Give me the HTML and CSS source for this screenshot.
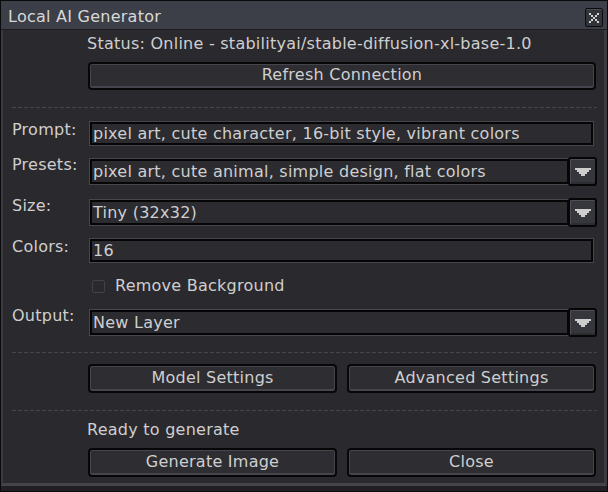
FILE: index.html
```html
<!DOCTYPE html>
<html lang="en">

<head>
    <meta charset="UTF-8">
    <meta name="viewport" content="width=device-width, initial-scale=1.0">
    <title>Local AI Generator</title>
    <link rel="stylesheet" href="styles.css">
</head>

<body>

    <div class="window">
        <!-- Title bar -->
        <div class="titlebar">
            <span class="title">Local AI Generator</span>
            <button class="close-btn" type="button" aria-label="Close">
                <svg width="10" height="10" viewBox="0 0 10 10">
                    <path fill="#d2d2d2" d="M0 0h2v2H0zM2 2h2v2H2zM4 4h2v2H4zM6 6h2v2H6zM8 8h2v2H8zM8 0h2v2H8zM6 2h2v2H6zM2 6h2v2H2zM0 8h2v2H0z" />
                </svg>
            </button>
        </div>

        <div class="content">
            <!-- Connection -->
            <p class="status">Status: Online - stabilityai/stable-diffusion-xl-base-1.0</p>
            <button class="btn btn-wide" type="button">Refresh Connection</button>

            <hr class="sep sep-first">

            <!-- Generation options -->
            <div class="form">
                <label class="field-label" for="prompt">Prompt:</label>
                <input class="entry" id="prompt" type="text" value="pixel art, cute character, 16-bit style, vibrant colors">

                <label class="field-label">Presets:</label>
                <div class="combo">
                    <div class="combo-value">pixel art, cute animal, simple design, flat colors</div>
                    <div class="combo-btn">
                        <svg width="16" height="8" viewBox="0 0 16 8">
                            <path fill="#cdcdcd" d="M0 0H16V2H14V4H12V6H10V8H6V6H4V4H2V2H0Z" />
                        </svg>
                    </div>
                </div>

                <label class="field-label">Size:</label>
                <div class="combo">
                    <div class="combo-value">Tiny (32x32)</div>
                    <div class="combo-btn">
                        <svg width="16" height="8" viewBox="0 0 16 8">
                            <path fill="#cdcdcd" d="M0 0H16V2H14V4H12V6H10V8H6V6H4V4H2V2H0Z" />
                        </svg>
                    </div>
                </div>

                <label class="field-label" for="colors">Colors:</label>
                <input class="entry" id="colors" type="text" value="16">

                <div class="check-row">
                    <span class="checkbox"></span>
                    <span>Remove Background</span>
                </div>

                <label class="field-label">Output:</label>
                <div class="combo">
                    <div class="combo-value">New Layer</div>
                    <div class="combo-btn">
                        <svg width="16" height="8" viewBox="0 0 16 8">
                            <path fill="#cdcdcd" d="M0 0H16V2H14V4H12V6H10V8H6V6H4V4H2V2H0Z" />
                        </svg>
                    </div>
                </div>
            </div>

            <hr class="sep sep-mid">

            <div class="btn-row">
                <button class="btn" type="button">Model Settings</button>
                <button class="btn" type="button">Advanced Settings</button>
            </div>

            <hr class="sep sep-last">

            <!-- Actions -->
            <p class="ready">Ready to generate</p>
            <div class="btn-row btn-row-last">
                <button class="btn" type="button">Generate Image</button>
                <button class="btn" type="button">Close</button>
            </div>
        </div>
    </div>

</body>

</html>
```

FILE: styles.css
```css
* {
    box-sizing: border-box;
}

html,
body {
    margin: 0;
    background-color: #1f1f23;
}

body {
    width: 608px;
    height: 492px;
    overflow: hidden;
    font-family: 'DejaVu Sans', sans-serif;
    font-size: 16px;
    letter-spacing: 0.25px;
    color: #cfcfcf;
}

button,
input {
    font: inherit;
    letter-spacing: inherit;
    color: inherit;
}

.window {
    display: flex;
    flex-direction: column;
    height: 492px;
    border: 1px solid #0a0a0c;
    background-color: #202024;
}

/* Title bar */
.titlebar {
    display: flex;
    justify-content: space-between;
    align-items: flex-start;
    flex: none;
    height: 29px;
    background-color: #3c3f47;
    border-bottom: 1px solid #1e1e22;
}

.title {
    padding: 7px 0 0 7px;
    line-height: 18px;
    color: #d8d8d8;
}

.close-btn {
    display: flex;
    align-items: center;
    justify-content: center;
    width: 18px;
    height: 19px;
    margin: 7px 4px 0 0;
    padding: 0;
    border: 1px solid #0c0c0e;
    border-radius: 2px;
    background-color: #33343a;
    box-shadow: inset 0 1px 0 #4a4b52;
}

/* Dialog body */
.content {
    flex: none;
    height: 456px;
    padding: 5px 7px 0 9px;
    background-color: #2a292e;
    border-left: 2px solid #3a3a41;
    border-right: 3px solid #3a3a41;
    border-bottom: 3px solid #44444b;
}

.status,
.ready {
    margin: 0 0 0 75px;
    line-height: 18px;
}

.btn {
    display: block;
    height: 29px;
    padding: 0 0 2px;
    line-height: 18px;
    background-color: #2d2d32;
    border: 2px solid #070708;
    border-radius: 4px;
    box-shadow: inset 0 0 0 1px #45464d, inset 0 -2px 0 #45464d;
}

.btn-wide {
    width: 508px;
    height: 28px;
    margin: 9px 0 0 76px;
}

.sep {
    height: 1px;
    border: 0;
    background-image: repeating-linear-gradient(90deg, #45454c 0 4px, transparent 4px 6px);
}

.sep-first {
    margin: 17px 0 14px;
}

.sep-mid {
    margin: 15px 0 11px;
}

.sep-last {
    margin: 17px 0 10px;
}

/* Form grid */
.form {
    display: grid;
    grid-template-columns: 76px 1fr;
    row-gap: 12px;
    align-items: start;
}

.field-label {
    margin-top: -1px;
    line-height: 18px;
}

.entry {
    display: block;
    width: 503px;
    height: 23px;
    margin: 0 0 0 2px;
    padding: 0 1px;
    line-height: 18px;
    background-color: #2b2b30;
    border: 2px solid #050506;
    box-shadow: 0 0 0 1px #46474e;
    outline: none;
}

.combo {
    display: flex;
    align-items: center;
    height: 29px;
}

.combo-value {
    width: 479px;
    height: 25px;
    margin-left: 2px;
    padding: 2px 1px 0;
    line-height: 18px;
    background-color: #2b2b30;
    border: 2px solid #050506;
    box-shadow: 0 0 0 1px #46474e;
    white-space: nowrap;
}

.combo-btn {
    display: flex;
    align-items: center;
    justify-content: center;
    width: 29px;
    height: 29px;
    margin-left: -1px;
    background-color: #36373d;
    border: 2px solid #060607;
    border-radius: 3px;
    box-shadow: inset 1px 1px 0 #4c4d55, inset 0 -2px 0 #2c2c31;
}

.check-row {
    grid-column: 2;
    display: flex;
    align-items: center;
    gap: 10px;
    height: 22px;
    padding: 2px 0 0 4px;
    line-height: 18px;
}

.checkbox {
    width: 13px;
    height: 13px;
    background-color: #2a2a2e;
    border: 1px solid #414147;
    border-radius: 2px;
}

.btn-row {
    display: flex;
    gap: 10px;
    width: 508px;
    margin-left: 76px;
}

.btn-row .btn {
    flex: 1;
}

.btn-row-last {
    margin-top: 9px;
}
```
